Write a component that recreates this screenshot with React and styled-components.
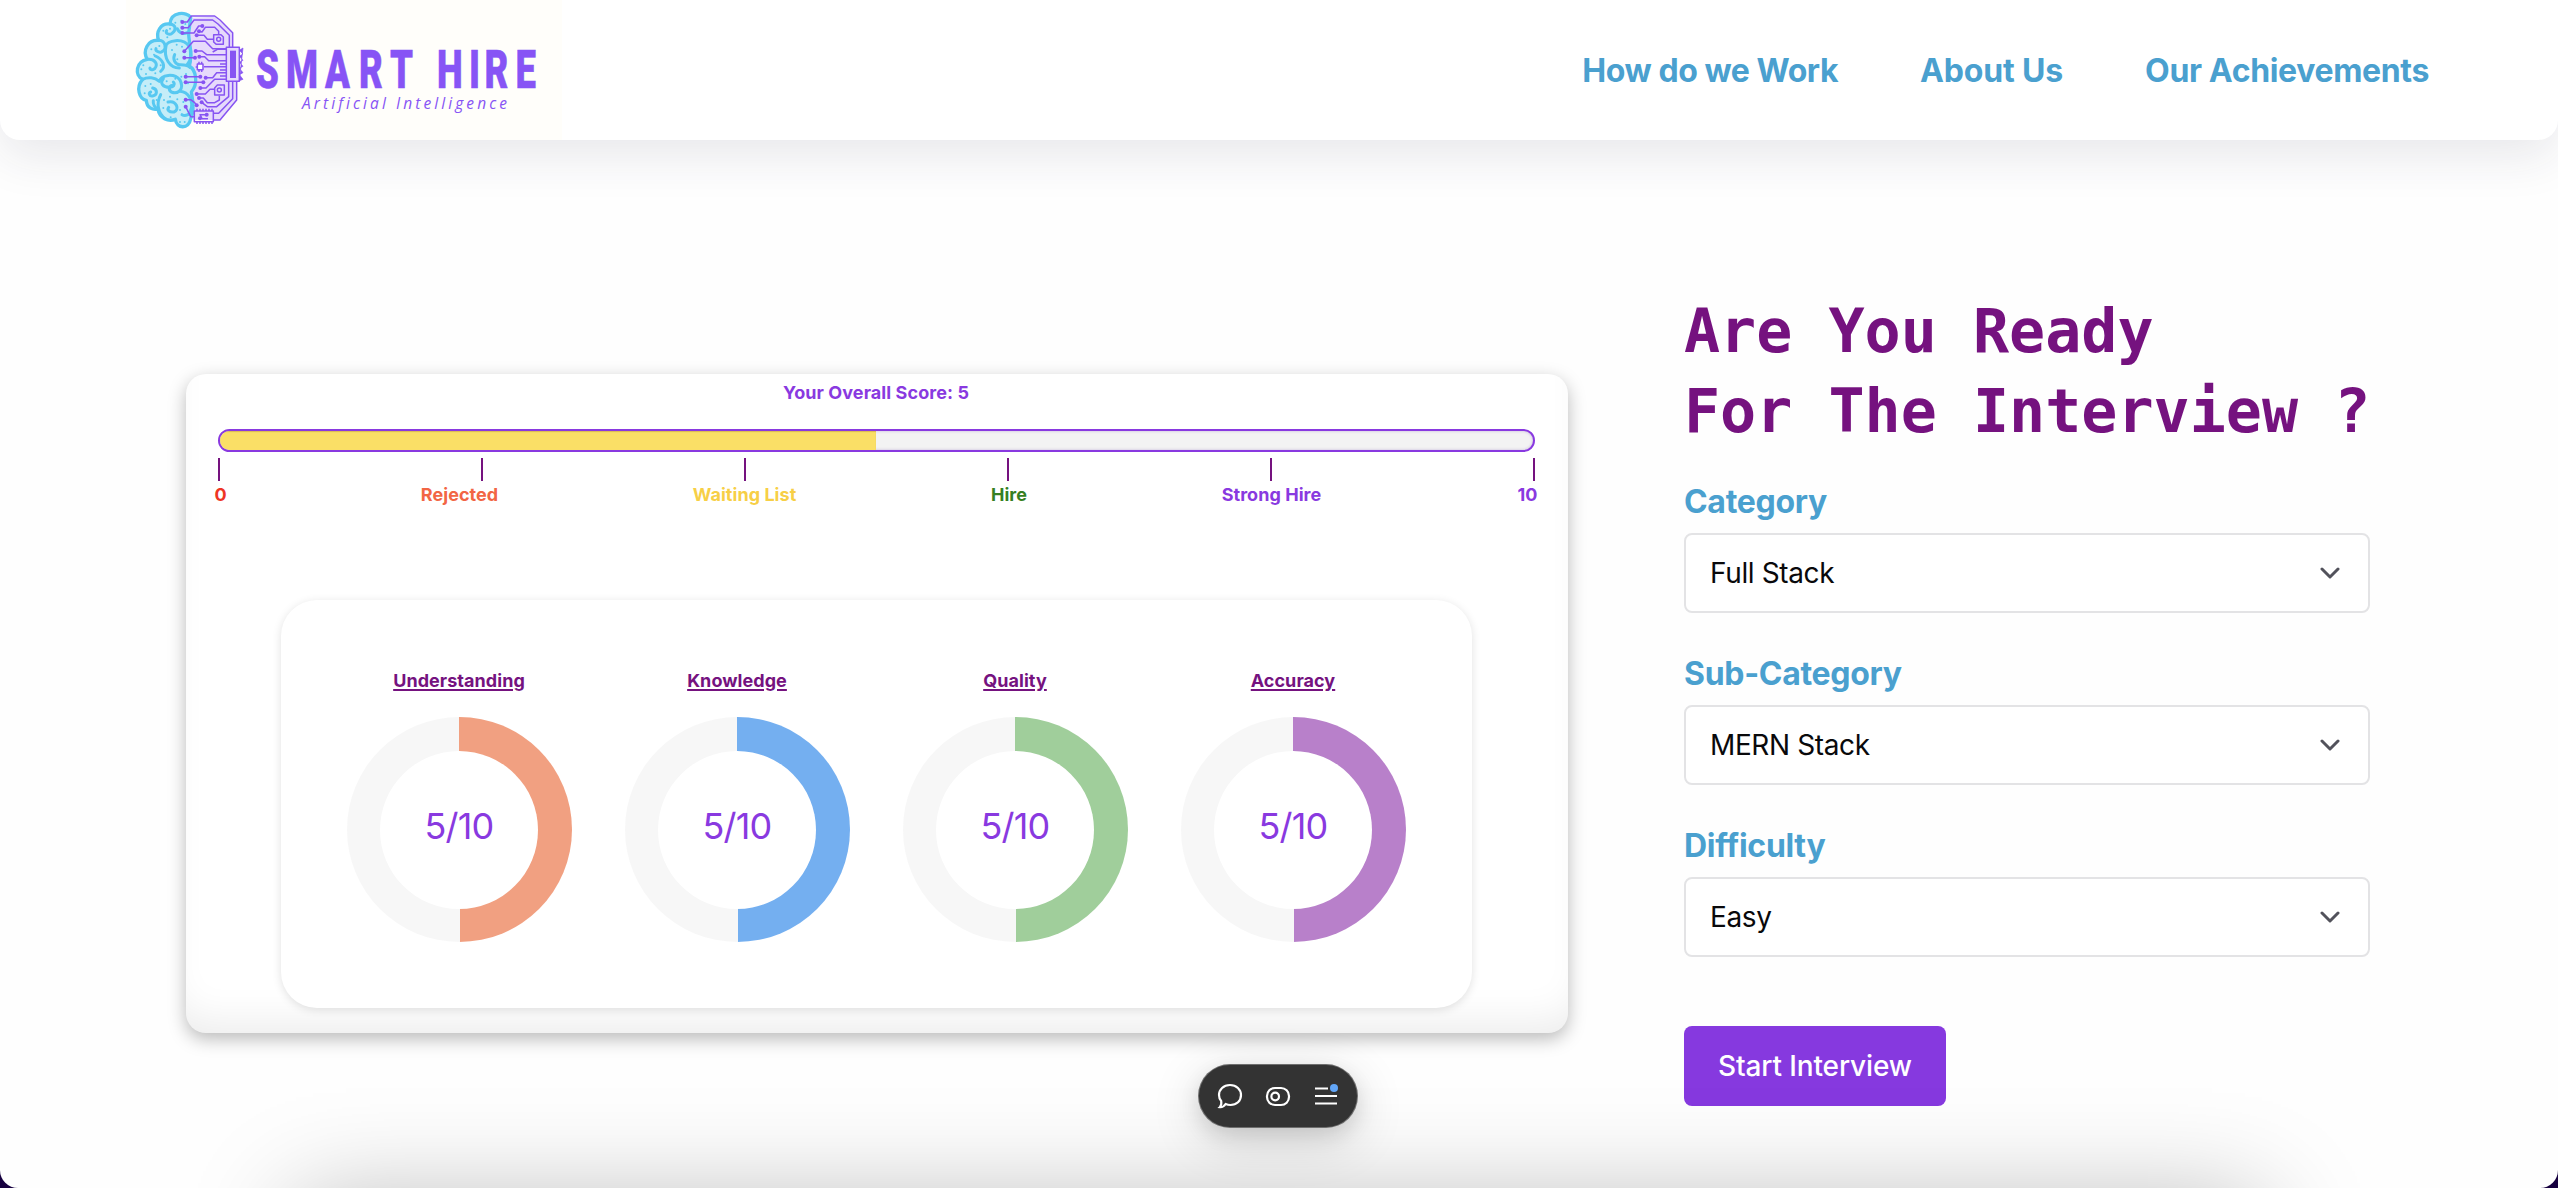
import React from 'react';
import styled, { createGlobalStyle } from 'styled-components';

const SANS = "Inter, 'Liberation Sans', sans-serif";

const GlobalStyle = createGlobalStyle`
  * { box-sizing: border-box; }
  html, body { margin: 0; height: 100%; overflow: hidden; background: #16003f; }
  h1, h2, h3, p { margin: 0; }
`;

const Page = styled.div`
  position: relative;
  width: 100%;
  height: 1188px;
  overflow: hidden;
  border-radius: 0 0 18px 18px;
  background: #fefefe;
  font-family: ${SANS};
`;

const Header = styled.header`
  display: flex;
  align-items: center;
  justify-content: space-between;
  height: 140px;
  padding: 0 129px 0 126px;
  background: #fff;
  border-radius: 0 0 20px 20px;
  box-shadow: 0 16px 48px rgba(40, 40, 66, 0.1);
`;

const LogoSvg = styled.svg`
  display: block;
  width: 436px;
  height: 140px;
  background: #fffefa;
`;

const Tagline = styled.text`
  fill: #8754f5;
  font-family: 'Open Sans', sans-serif;
  font-style: italic;
  font-size: 15.5px;
  font-variant-ligatures: none;
`;

const Nav = styled.nav`
  display: flex;
  gap: 82px;
  padding-top: 2px;
`;

const NavLink = styled.a`
  color: #4aa0cf;
  font-size: 32px;
  font-weight: 700;
  line-height: 40px;
  letter-spacing: ${(p) => p.$track}px;
  white-space: nowrap;
`;

const Main = styled.main`
  display: flex;
  align-items: flex-start;
  padding-left: 186px;
`;

const ScoreCard = styled.section`
  display: flex;
  flex-direction: column;
  align-items: center;
  width: 1382px;
  height: 659px;
  margin-top: 234px;
  padding: 7px 33px 0 31px;
  border-radius: 20px;
  background: #fff;
  box-shadow: 0 6px 18px rgba(0, 0, 0, 0.27), inset 0 -30px 40px -20px rgba(0, 0, 0, 0.078);
`;

const ScoreTitle = styled.h3`
  color: #8939e0;
  font-size: 18px;
  font-weight: 700;
  line-height: 24px;
  letter-spacing: 0.08px;
`;

const Track = styled.div`
  width: 1317px;
  height: 23px;
  margin-top: 24px;
  border: 2px solid #8939e0;
  border-radius: 12px;
  overflow: hidden;
  background: #f3f3f3;
  box-shadow: inset 0 0 3px rgba(90, 40, 160, 0.3);
`;

const Fill = styled.div`
  height: 100%;
  background: #fadf66;
  box-shadow: inset 0 1px 1px rgba(90, 40, 0, 0.2);
`;

const Scale = styled.div`
  display: flex;
  justify-content: space-between;
  width: 1317px;
  margin-top: 6px;
`;

const Mark = styled.div`
  display: flex;
  flex-direction: column;
  align-items: center;
  width: 2px;
`;

const Tick = styled.span`
  width: 2px;
  height: 23px;
  background: #75127f;
`;

const MarkLabel = styled.span`
  margin: 1px 0;
  padding-left: ${(p) => Math.max(p.$shift, 0)}px;
  padding-right: ${(p) => Math.max(-p.$shift, 0)}px;
  color: ${(p) => p.$color};
  font-size: 18px;
  font-weight: 700;
  line-height: 25px;
  letter-spacing: 0.05px;
  white-space: nowrap;
`;

const Metrics = styled.div`
  display: flex;
  gap: 53px;
  width: 1191px;
  height: 408px;
  margin-top: 92px;
  padding: 68px 66px 0;
  border-radius: 36px;
  background: #fff;
  box-shadow: 0 2px 10px rgba(0, 0, 0, 0.12);
`;

const Metric = styled.div`
  display: flex;
  flex-direction: column;
  align-items: center;
  width: 225px;
`;

const MetricName = styled.h3`
  color: #75127f;
  font-size: 18px;
  font-weight: 700;
  line-height: 26px;
  letter-spacing: 0.05px;
  text-decoration: underline;
  text-decoration-thickness: 2px;
  text-underline-offset: 2px;
`;

const Ring = styled.div`
  display: flex;
  align-items: center;
  justify-content: center;
  width: 225px;
  height: 225px;
  margin-top: 23px;
  border-radius: 50%;
  background: conic-gradient(${(p) => p.$color} 0 50%, #f7f7f7 50% 100%);
`;

const RingHole = styled.div`
  width: 158px;
  height: 158px;
  border-radius: 50%;
  background: #fff;
  color: #8939e0;
  font-size: 36px;
  line-height: 151px;
  text-align: center;
  letter-spacing: -0.8px;
`;

const FormColumn = styled.section`
  width: 686px;
  margin: 151px 0 0 116px;
`;

const Heading = styled.h1`
  color: #75127f;
  font-family: 'DejaVu Sans Mono', monospace;
  font-size: 60px;
  font-weight: 700;
  line-height: 80px;
  white-space: nowrap;
`;

const Field = styled.div`
  height: 172px;
  padding-top: 31px;
`;

const Label = styled.label`
  display: block;
  margin-bottom: 11px;
  color: #4aa0cf;
  font-size: 32px;
  font-weight: 700;
  line-height: 40px;
  letter-spacing: -0.3px;
`;

const SelectBox = styled.div`
  display: flex;
  align-items: center;
  justify-content: space-between;
  height: 80px;
  padding: 0 28px 0 24px;
  border: 2px solid #e3e3e5;
  border-radius: 8px;
  background: #fff;
  color: #09090b;
  font-size: 28px;
  letter-spacing: -0.38px;
`;

const StartButton = styled.button`
  width: 262px;
  height: 80px;
  margin-top: 59px;
  padding: 0;
  border: 0;
  border-radius: 8px;
  background: #8639df;
  color: #fff;
  font-family: ${SANS};
  font-size: 28px;
  font-weight: 500;
  letter-spacing: -0.12px;
`;

const NextSection = styled.div`
  position: absolute;
  left: 296px;
  right: 296px;
  top: 1202px;
  height: 400px;
  box-shadow: 0 0 100px rgba(0, 0, 0, 0.28);
`;

const Toolbar = styled.div`
  position: absolute;
  left: 1198px;
  top: 1064px;
  display: flex;
  align-items: center;
  justify-content: center;
  gap: 22px;
  width: 160px;
  height: 64px;
  border: 1px solid rgba(150, 150, 150, 0.6);
  border-radius: 32px;
  background: #333;
  box-shadow: 0 12px 50px rgba(0, 0, 0, 0.16), 0 8px 20px rgba(0, 0, 0, 0.1);
`;

const ToolIcon = styled.svg`
  display: block;
  width: 26px;
  height: 32px;
  overflow: visible;
  fill: none;
  stroke: #fff;
  stroke-width: 2.2;
`;

const BLOBS =
  'M212 52 C200 34 152 34 150 72 C122 68 106 96 116 121 C84 118 66 152 82 178 C48 184 42 226 68 238 C46 262 58 298 79 301 C80 325 100 331 114 327 C118 355 145 366 166 358 C170 388 207 388 212 356 C224 330 218 300 214 276 C236 250 228 210 208 198 C220 160 206 130 206 100 Z';

const CURLS = [
  'M206 96 C194 104 176 100 172 86',
  'M150 72 C166 74 172 88 156 100 C148 106 134 100 140 92',
  'M116 121 C138 122 142 150 124 156 C114 158 106 152 108 146',
  'M82 178 C104 176 116 192 104 206 C98 212 88 208 90 204',
  'M122 214 C140 200 128 178 106 168',
  'M136 140 C140 120 190 112 208 140 C216 156 216 180 200 196',
  'M138 138 C130 176 150 204 178 204 M164 164 C158 176 164 196 182 194 C196 194 206 198 210 202',
  'M68 238 C84 230 104 232 118 244 C124 224 162 218 180 240 C194 268 174 284 154 276 C142 268 150 252 160 258',
  'M130 236 C118 250 130 262 148 262 C160 262 166 252 160 246',
  'M98 264 C114 268 112 286 98 288 C88 290 84 278 92 276',
  'M122 284 C108 310 114 340 136 356',
  'M144 306 C170 300 180 330 162 336 C148 338 140 330 146 322',
  'M180 274 C206 276 222 304 212 330',
  'M186 344 C196 350 210 344 212 332',
  'M116 327 C104 324 98 312 100 302',
];

const DOTS = [
  [166, 68], [184, 62], [196, 72], [130, 92], [150, 86], [142, 112], [94, 148], [118, 138], [102, 164],
  [70, 196], [64, 208], [78, 222], [106, 220], [122, 196], [156, 150], [170, 134], [186, 140], [172, 178],
  [198, 222], [184, 230], [204, 250], [76, 258], [92, 252], [74, 280], [110, 300], [140, 244], [166, 236],
  [132, 300], [150, 290], [172, 298], [190, 306], [130, 324], [152, 352], [180, 330], [194, 366], [180, 366],
];

const TRACES = [
  'M187 66 H202 L214 48 H284 L300 60 L338 98 V142',
  'M187 83 H205 L222 60 H278 L294 72 L328 106 V142',
  'M187 99 H222 L236 78 H247',
  'M230 106 H252 L262 118 H280 M237 94 L246 96 L256 82 H284 L296 94 V104',
  'M193 154 L220 124 H256 L278 146 H318',
  'M227 153 H246 L260 164 H318',
  'M238 170 H254 L266 182 H318 M252 200 H318',
  'M193 173 H225 M197 230 H241 M197 247 H250',
  'M257 233 H278 L290 218 H318',
  'M241 264 H258 L284 238 H318',
  'M230 282 H256 L270 268 H284',
  'M237 294 L250 294 L262 308 H284 L298 300 V288',
  'M245 307 L262 320 H290 L326 290 V244',
  'M197 299 H212 L224 308 L230 316 M197 320 L212 350 H222',
  'M338 244 V296 L296 340 H282 M350 244 V300 L300 360 H282',
  'M260 344 H240 L246 356 H264',
  'M278 156 L292 148 H318 M300 192 H318 M300 210 H318 M300 228 H318',
];

const NODES = [
  [187, 66], [187, 83], [187, 99], [247, 78], [230, 106], [237, 94], [193, 154], [227, 153], [238, 170],
  [193, 173], [225, 173], [197, 230], [241, 230], [197, 247], [250, 247], [257, 233], [241, 264], [230, 282],
  [237, 294], [245, 307], [197, 299], [230, 316], [197, 320], [260, 344], [240, 355],
];

// Left edge of each wordmark character, space included.
const WORDMARK_X = [130, 160, 199, 233, 264, 290, 311, 343, 358.5, 389.5];
const CONDENSE = 0.69;

function Logo() {
  return (
    <LogoSvg viewBox="0 0 436 140" role="img" aria-label="Smart Hire">
      <g transform="translate(-6 0) scale(0.33333)" strokeLinejoin="round">
        <path
          d="M200 54 L284 50 L338 98 V142 H350 V300 L298 360 H220 L200 300 Z"
          fill="#e6dafb"
        />
        <path d={BLOBS} fill="#c4edf8" stroke="#57c8f1" strokeWidth="10" />
        <g fill="none" stroke="#57c8f1" strokeWidth="9" strokeLinecap="round">
          {CURLS.map((d) => <path key={d} d={d} />)}
        </g>
        <g fill="#57c8f1">
          {DOTS.map(([x, y]) => <circle key={`${x}-${y}`} cx={x} cy={y} r="3" />)}
        </g>
        <g fill="none" stroke="#8754f2" strokeWidth="4.5">
          {TRACES.map((d) => <path key={d} d={d} />)}
          <path d="M281 104 H303 L310 111 V133 H289 L281 126 Z" fill="#e6dafb" />
          <circle cx="296" cy="118" r="6" />
          <path d="M284 264 L292 255 H313 V285 H284 Z" fill="#e6dafb" />
          <circle cx="298" cy="270" r="6" />
          <path d="M232 192 H249 V209 H232 Z M237 185 V192 M245 185 V192 M237 209 V216 M245 209 V216 M227 201 H232" fill="#fff" />
          <path d="M223 333 H280 V365 H223 Z" />
          <path d="M231 326 V333 M240 326 V333 M249 326 V333 M258 326 V333 M267 326 V333 M276 326 V333 M231 365 V372 M240 365 V372 M249 365 V372 M258 365 V372 M267 365 V372 M276 365 V372" />
          <path d="M319 142 H358 V244 H319 Z" fill="#e6dafb" />
          <path d="M369 144 L358 151 L369 162 L358 169 L369 181 L358 187 L369 199 L358 205 L369 218 L358 224 L369 238 L358 242 Z" fill="#8754f2" strokeWidth="2" />
        </g>
        <rect x="330" y="152" width="18" height="82" fill="#8754f2" />
        <g fill="#8754f2">
          {NODES.map(([x, y]) => <circle key={`${x}-${y}`} cx={x} cy={y} r="6" />)}
        </g>
      </g>
      <text
        transform={`translate(0 87.5) scale(${CONDENSE} 1)`}
        x={WORDMARK_X.map((x) => (x / CONDENSE).toFixed(1)).join(' ')}
        y="0"
        fill="#8754f5"
        stroke="#8754f5"
        strokeWidth="0.5"
        fontFamily="Roboto, sans-serif"
        fontWeight="900"
        fontSize="53"
      >
        SMART HIRE
      </text>
      <Tagline x="176" y="109" textLength="205">
        Artificial Intelligence
      </Tagline>
    </LogoSvg>
  );
}

const MARKS = [
  { text: '0', color: '#ee3524', shift: 4 },
  { text: 'Rejected', color: '#f26544', shift: -44 },
  { text: 'Waiting List', color: '#f7cf46', shift: 0 },
  { text: 'Hire', color: '#367f22', shift: 3 },
  { text: 'Strong Hire', color: '#8939e0', shift: 2 },
  { text: '10', color: '#8939e0', shift: -12 },
];

const METRICS = [
  { name: 'Understanding', color: '#f1a081' },
  { name: 'Knowledge', color: '#74aff0' },
  { name: 'Quality', color: '#a0ce9b' },
  { name: 'Accuracy', color: '#b880ca' },
];

const FIELDS = [
  { label: 'Category', value: 'Full Stack' },
  { label: 'Sub-Category', value: 'MERN Stack' },
  { label: 'Difficulty', value: 'Easy' },
];

function Chevron() {
  return (
    <svg width="20" height="12" viewBox="0 0 20 12" fill="none" stroke="#52525b" strokeWidth="3" strokeLinecap="round" strokeLinejoin="round">
      <path d="M2 2 L10 10 L18 2" />
    </svg>
  );
}

export default function App() {
  const score = 5;
  return (
    <>
      <GlobalStyle />
      <Page>
        <Header>
          <Logo />
          <Nav>
            <NavLink $track={-0.45}>How do we Work</NavLink>
            <NavLink $track={-0.15}>About Us</NavLink>
            <NavLink $track={-0.35}>Our Achievements</NavLink>
          </Nav>
        </Header>
        <Main>
          <ScoreCard>
            <ScoreTitle>Your Overall Score: {score}</ScoreTitle>
            <Track>
              <Fill style={{ width: `${score * 10}%` }} />
            </Track>
            <Scale>
              {MARKS.map((m) => (
                <Mark key={m.text}>
                  <Tick />
                  <MarkLabel $color={m.color} $shift={m.shift}>{m.text}</MarkLabel>
                </Mark>
              ))}
            </Scale>
            <Metrics>
              {METRICS.map((m) => (
                <Metric key={m.name}>
                  <MetricName>{m.name}</MetricName>
                  <Ring $color={m.color}>
                    <RingHole>{score}/10</RingHole>
                  </Ring>
                </Metric>
              ))}
            </Metrics>
          </ScoreCard>
          <FormColumn>
            <Heading>
              Are You Ready
              <br />
              For The Interview ?
            </Heading>
            {FIELDS.map((f) => (
              <Field key={f.label}>
                <Label>{f.label}</Label>
                <SelectBox>
                  {f.value}
                  <Chevron />
                </SelectBox>
              </Field>
            ))}
            <StartButton>Start Interview</StartButton>
          </FormColumn>
        </Main>
        <NextSection />
        <Toolbar>
          <ToolIcon viewBox="0 0 26 32">
            <path d="M13 5 C19.5 5 24 9.5 24 15 C24 21 19.5 25 13.5 25 C11.6 25 10 24.6 8.6 24 C7 26.4 4.6 27.4 2.8 27.2 C4.4 25.6 4.6 23.4 4.2 21 C2.6 19.2 2 17.3 2 15 C2 9.5 6.5 5 13 5 Z" />
          </ToolIcon>
          <ToolIcon viewBox="0 0 26 32">
            <rect x="2" y="8" width="22" height="17" rx="8" />
            <circle cx="10.2" cy="16.5" r="3.8" />
          </ToolIcon>
          <ToolIcon viewBox="0 0 26 32">
            <path d="M2 8.5 H15 M2 16 H24 M2 23.5 H24" />
            <circle cx="21" cy="8" r="4" fill="#62a6f8" stroke="none" />
          </ToolIcon>
        </Toolbar>
      </Page>
    </>
  );
}
